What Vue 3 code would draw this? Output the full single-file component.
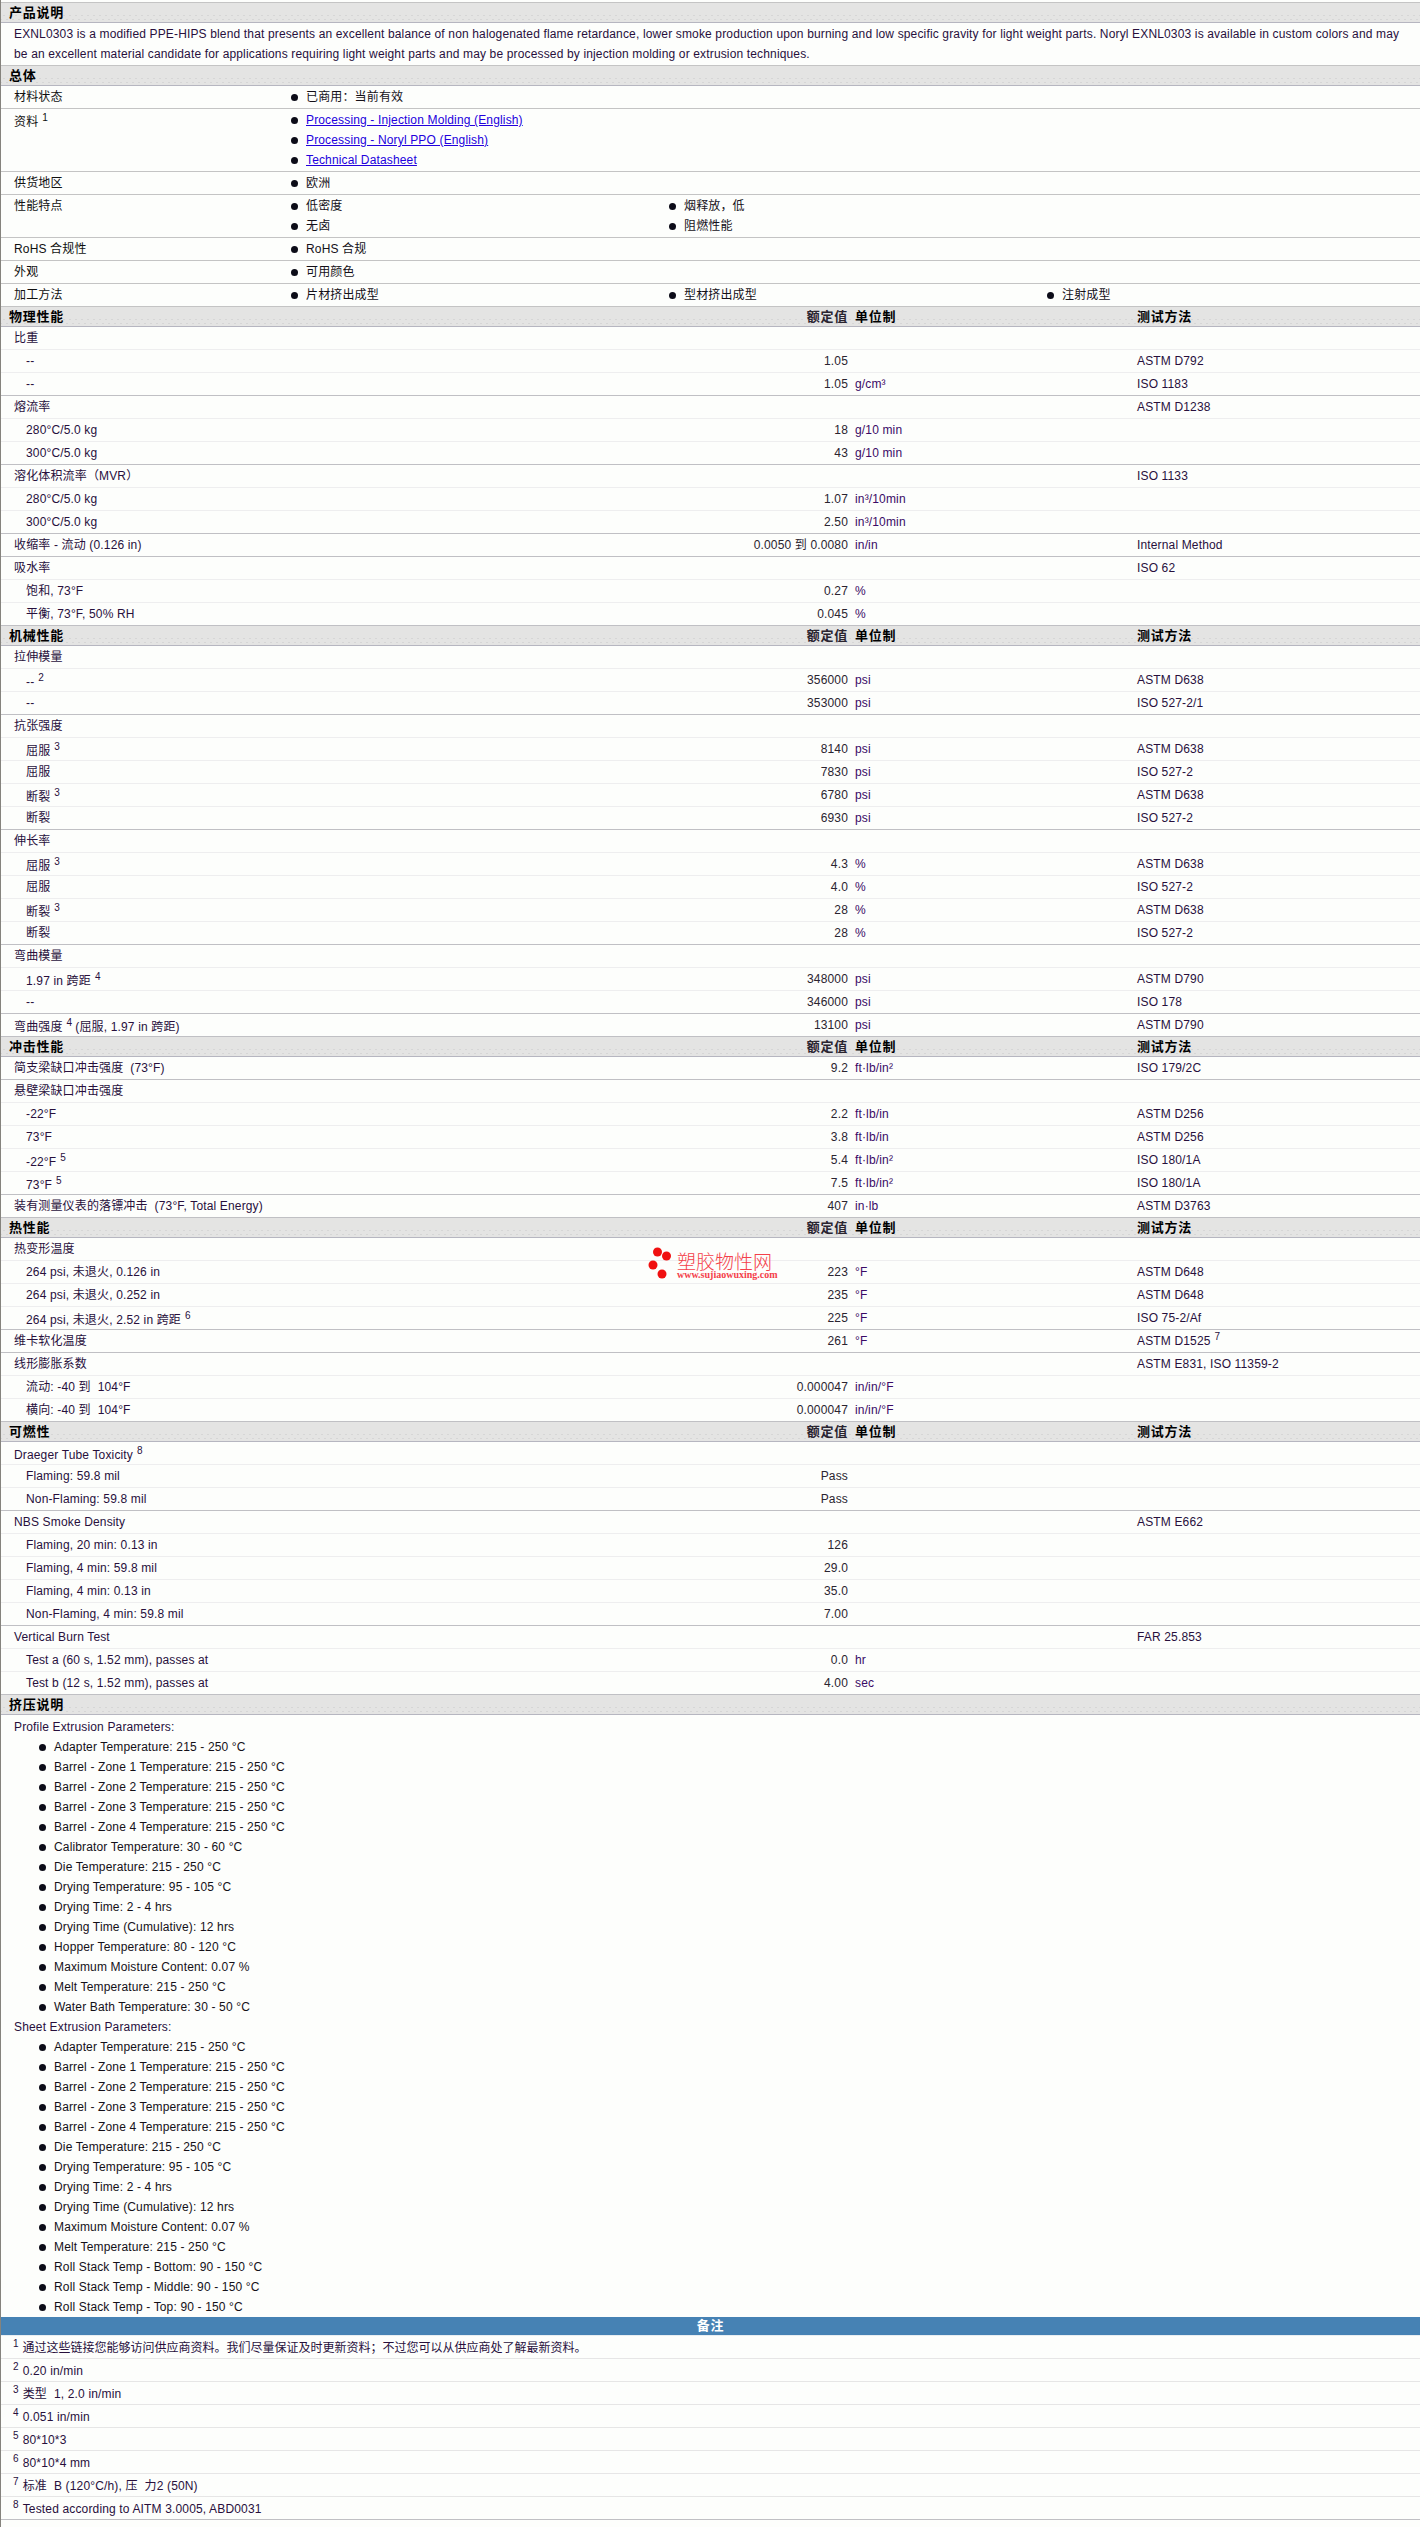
<script setup>
const r = (label, value = '', unit = '', method = '', sup = '', after = '', msup = '') => ({ label, value, unit, method, sup, after, msup })

const overview = [
  { label: '材料状态', cols: [[{ text: '已商用：当前有效' }]] },
  { label: '资料', sup: '1', cols: [[
    { url: 'Processing - Injection Molding (English)' },
    { url: 'Processing - Noryl PPO (English)' },
    { url: 'Technical Datasheet' }
  ]] },
  { label: '供货地区', cols: [[{ text: '欧洲' }]] },
  { label: '性能特点', cols: [[{ text: '低密度' }, { text: '无卤' }], [{ text: '烟释放，低' }, { text: '阻燃性能' }]] },
  { label: 'RoHS 合规性', cols: [[{ text: 'RoHS 合规' }]] },
  { label: '外观', cols: [[{ text: '可用颜色' }]] },
  { label: '加工方法', cols: [[{ text: '片材挤出成型' }], [{ text: '型材挤出成型' }], [{ text: '注射成型' }]] }
]

const sections = [
  { title: '物理性能', groups: [
    [r('比重'), r('--', '1.05', '', 'ASTM D792'), r('--', '1.05', 'g/cm³', 'ISO 1183')],
    [r('熔流率', '', '', 'ASTM D1238'), r('280°C/5.0 kg', '18', 'g/10 min'), r('300°C/5.0 kg', '43', 'g/10 min')],
    [r('溶化体积流率（MVR）', '', '', 'ISO 1133'), r('280°C/5.0 kg', '1.07', 'in³/10min'), r('300°C/5.0 kg', '2.50', 'in³/10min')],
    [r('收缩率 - 流动 (0.126 in)', '0.0050 到 0.0080', 'in/in', 'Internal Method')],
    [r('吸水率', '', '', 'ISO 62'), r('饱和, 73°F', '0.27', '%'), r('平衡, 73°F, 50% RH', '0.045', '%')]
  ] },
  { title: '机械性能', groups: [
    [r('拉伸模量'), r('--', '356000', 'psi', 'ASTM D638', '2'), r('--', '353000', 'psi', 'ISO 527-2/1')],
    [r('抗张强度'), r('屈服', '8140', 'psi', 'ASTM D638', '3'), r('屈服', '7830', 'psi', 'ISO 527-2'), r('断裂', '6780', 'psi', 'ASTM D638', '3'), r('断裂', '6930', 'psi', 'ISO 527-2')],
    [r('伸长率'), r('屈服', '4.3', '%', 'ASTM D638', '3'), r('屈服', '4.0', '%', 'ISO 527-2'), r('断裂', '28', '%', 'ASTM D638', '3'), r('断裂', '28', '%', 'ISO 527-2')],
    [r('弯曲模量'), r('1.97 in 跨距', '348000', 'psi', 'ASTM D790', '4'), r('--', '346000', 'psi', 'ISO 178')],
    [r('弯曲强度', '13100', 'psi', 'ASTM D790', '4', '(屈服, 1.97 in 跨距)')]
  ] },
  { title: '冲击性能', groups: [
    [r('简支梁缺口冲击强度  (73°F)', '9.2', 'ft·lb/in²', 'ISO 179/2C')],
    [r('悬壁梁缺口冲击强度'), r('-22°F', '2.2', 'ft·lb/in', 'ASTM D256'), r('73°F', '3.8', 'ft·lb/in', 'ASTM D256'), r('-22°F', '5.4', 'ft·lb/in²', 'ISO 180/1A', '5'), r('73°F', '7.5', 'ft·lb/in²', 'ISO 180/1A', '5')],
    [r('装有测量仪表的落镖冲击  (73°F, Total Energy)', '407', 'in·lb', 'ASTM D3763')]
  ] },
  { title: '热性能', groups: [
    [r('热变形温度'), r('264 psi, 未退火, 0.126 in', '223', '°F', 'ASTM D648'), r('264 psi, 未退火, 0.252 in', '235', '°F', 'ASTM D648'), r('264 psi, 未退火, 2.52 in 跨距', '225', '°F', 'ISO 75-2/Af', '6')],
    [r('维卡软化温度', '261', '°F', 'ASTM D1525', '', '', '7')],
    [r('线形膨胀系数', '', '', 'ASTM E831, ISO 11359-2'), r('流动: -40 到  104°F', '0.000047', 'in/in/°F'), r('横向: -40 到  104°F', '0.000047', 'in/in/°F')]
  ] },
  { title: '可燃性', groups: [
    [r('Draeger Tube Toxicity', '', '', '', '8'), r('Flaming: 59.8 mil', 'Pass'), r('Non-Flaming: 59.8 mil', 'Pass')],
    [r('NBS Smoke Density', '', '', 'ASTM E662'), r('Flaming, 20 min: 0.13 in', '126'), r('Flaming, 4 min: 59.8 mil', '29.0'), r('Flaming, 4 min: 0.13 in', '35.0'), r('Non-Flaming, 4 min: 59.8 mil', '7.00')],
    [r('Vertical Burn Test', '', '', 'FAR 25.853'), r('Test a (60 s, 1.52 mm), passes at', '0.0', 'hr'), r('Test b (12 s, 1.52 mm), passes at', '4.00', 'sec')]
  ] }
]

const extrusion = [
  { title: 'Profile Extrusion Parameters:', items: [
    'Adapter Temperature: 215 - 250 °C',
    'Barrel - Zone 1 Temperature: 215 - 250 °C',
    'Barrel - Zone 2 Temperature: 215 - 250 °C',
    'Barrel - Zone 3 Temperature: 215 - 250 °C',
    'Barrel - Zone 4 Temperature: 215 - 250 °C',
    'Calibrator Temperature: 30 - 60 °C',
    'Die Temperature: 215 - 250 °C',
    'Drying Temperature: 95 - 105 °C',
    'Drying Time: 2 - 4 hrs',
    'Drying Time (Cumulative): 12 hrs',
    'Hopper Temperature: 80 - 120 °C',
    'Maximum Moisture Content: 0.07 %',
    'Melt Temperature: 215 - 250 °C',
    'Water Bath Temperature: 30 - 50 °C'
  ] },
  { title: 'Sheet Extrusion Parameters:', items: [
    'Adapter Temperature: 215 - 250 °C',
    'Barrel - Zone 1 Temperature: 215 - 250 °C',
    'Barrel - Zone 2 Temperature: 215 - 250 °C',
    'Barrel - Zone 3 Temperature: 215 - 250 °C',
    'Barrel - Zone 4 Temperature: 215 - 250 °C',
    'Die Temperature: 215 - 250 °C',
    'Drying Temperature: 95 - 105 °C',
    'Drying Time: 2 - 4 hrs',
    'Drying Time (Cumulative): 12 hrs',
    'Maximum Moisture Content: 0.07 %',
    'Melt Temperature: 215 - 250 °C',
    'Roll Stack Temp - Bottom: 90 - 150 °C',
    'Roll Stack Temp - Middle: 90 - 150 °C',
    'Roll Stack Temp - Top: 90 - 150 °C'
  ] }
]

const notes = [
  '通过这些链接您能够访问供应商资料。我们尽量保证及时更新资料；不过您可以从供应商处了解最新资料。',
  '0.20 in/min',
  '类型  1, 2.0 in/min',
  '0.051 in/min',
  '80*10*3',
  '80*10*4 mm',
  '标准  B (120°C/h), 压  力2 (50N)',
  'Tested according to AITM 3.0005, ABD0031'
]
</script>

<template>
  <div class="page">
    <div class="head first"><span class="head-title">产品说明</span></div>
    <p class="desc">EXNL0303 is a modified PPE-HIPS blend that presents an excellent balance of non halogenated flame retardance, lower smoke production upon burning and low specific gravity for light weight parts. Noryl EXNL0303 is available in custom colors and may be an excellent material candidate for applications requiring light weight parts and may be processed by injection molding or extrusion techniques.</p>

    <div class="head"><span class="head-title">总体</span></div>
    <div v-for="row in overview" :key="row.label" class="ov-row">
      <div class="ov-label" :class="{ raised: row.sup }">{{ row.label }}<sup v-if="row.sup">{{ row.sup }}</sup></div>
      <div v-for="(col, c) in row.cols" :key="c" class="ov-col">
        <div v-for="(item, i) in col" :key="i" class="dot-item">
          <a v-if="item.url" href="#" class="link">{{ item.url }}</a>
          <template v-else>{{ item.text }}</template>
        </div>
      </div>
    </div>

    <template v-for="s in sections" :key="s.title">
      <div class="head cols">
        <span class="head-title">{{ s.title }}</span>
        <span class="val">额定值</span>
        <span class="unit">单位制</span>
        <span>测试方法</span>
      </div>
      <template v-for="(g, gi) in s.groups" :key="gi">
        <div
          v-for="(row, ri) in g"
          :key="ri"
          class="row"
          :class="{ sub: ri > 0, end: ri === g.length - 1 }"
        >
          <div class="label" :class="{ raised: row.sup }">{{ row.label }}<sup v-if="row.sup">{{ row.sup }}</sup><span v-if="row.after" class="after">{{ row.after }}</span></div>
          <div class="val">{{ row.value }}</div>
          <div class="unit">{{ row.unit }}</div>
          <div class="method">{{ row.method }}<sup v-if="row.msup">{{ row.msup }}</sup></div>
        </div>
      </template>
    </template>

    <div class="head"><span class="head-title">挤压说明</span></div>
    <div class="extrusion">
      <template v-for="block in extrusion" :key="block.title">
        <div class="ex-title">{{ block.title }}</div>
        <div v-for="(item, i) in block.items" :key="i" class="dot-item ex-item">{{ item }}</div>
      </template>
    </div>

    <div class="bar">备注</div>
    <div v-for="(note, i) in notes" :key="i" class="note" :class="{ end: i === notes.length - 1, cjk: i === 0 }">
      <sup>{{ i + 1 }}</sup>{{ note }}
    </div>

    <div class="mark">
      <svg class="mark-dots" width="28" height="34" viewBox="0 0 28 34">
        <circle cx="9.5" cy="5" r="4.5" fill="#f01010" />
        <circle cx="18.5" cy="9" r="4.5" fill="#f01010" />
        <circle cx="5" cy="18" r="4.5" fill="#f01010" />
        <circle cx="14" cy="27" r="4.5" fill="#f01010" />
      </svg>
      <div class="mark-text">
        <div class="mark-cn">塑胶物性网</div>
        <div class="mark-url">www.sujiaowuxing.com</div>
      </div>
    </div>
  </div>
</template>

<style>
html, body { margin: 0; background: #fff; }
</style>

<style scoped>
.page {
  position: relative;
  box-sizing: border-box;
  width: 1420px;
  min-height: 2527px;
  padding-top: 2px;
  border-left: 1px solid #85837d;
  background: #fdfefc;
  font: 12px/20px "Liberation Sans", "Noto Sans CJK SC", sans-serif;
  letter-spacing: 0.15px;
  color: #28103c;
  white-space: pre-wrap;
}
.head {
  box-sizing: border-box;
  height: 20px;
  padding-left: 8px;
  font-size: 13px;
  line-height: 19px;
  letter-spacing: 0.75px;
  border-bottom: 1px solid #b6b6c0;
  background:
    radial-gradient(circle, #d6d6d6 0.6px, transparent 0.8px) 60px 11px / 6px 3px repeat-x,
    radial-gradient(circle, #d6d6d6 0.6px, transparent 0.8px) 63px 15px / 6px 3px repeat-x,
    #e4e4e3;
  font-weight: 700;
  color: #000;
}
.head.first {
  height: 21px;
  border-top: 1px solid #c4c4c4;
}
.head.cols {
  display: grid;
  grid-template-columns: 691px 148px 289px 1fr;
}
.desc {
  margin: 0;
  padding: 1px 20px 1px 13px;
  border-bottom: 1px solid #c4c4c4;
}
.ov-row {
  display: grid;
  grid-template-columns: 290px repeat(3, 378px);
  box-sizing: border-box;
  padding: 1px 0;
  border-bottom: 1px solid #c4c4c4;
}
.ov-label { padding-left: 13px; color: #101010; }
.dot-item {
  display: flex;
  align-items: center;
  color: #141018;
}
.dot-item::before {
  content: "";
  flex: none;
  width: 7px;
  height: 7px;
  margin-right: 8px;
  border-radius: 50%;
  background: #0c0c18;
}
.link { color: #2200dd; text-decoration: underline; }
.row {
  display: grid;
  grid-template-columns: 699px 148px 289px 1fr;
  box-sizing: border-box;
  height: 23px;
  padding: 1px 0;
  border-bottom: 1px solid #eeeeef;
}
.row.end { border-bottom-color: #c0c0c4; }
.label { padding-left: 13px; }
.row.sub .label { padding-left: 25px; }
.raised { padding-top: 2px; }
.val { text-align: right; color: #2a2430; }
.unit { padding-left: 7px; color: #3a0a66; }
.head .unit { color: #000; }
.after { margin-left: 3px; }
sup {
  margin-left: 4px;
  font-size: 10px;
  line-height: 0;
  vertical-align: 5px;
}
.extrusion { padding-top: 2px; }
.ex-title { padding-left: 13px; }
.ex-item { padding-left: 38px; }
.bar {
  box-sizing: border-box;
  height: 19px;
  font-size: 13px;
  line-height: 18px;
  letter-spacing: 0.75px;
  border-bottom: 1px solid #e8eef2;
  background: #4682b4;
  color: #fff;
  font-weight: 700;
  text-align: center;
}
.note {
  box-sizing: border-box;
  height: 23px;
  padding: 2px 0 0 8px;
  border-bottom: 1px solid #e6e6e6;
}
.note.cjk { letter-spacing: 0; }
.note.end { border-bottom-color: #c0c0c4; }
.note sup { margin-right: 4px; }
.mark {
  position: absolute;
  left: 647px;
  top: 1247px;
  display: flex;
  gap: 1px;
  color: #f4404a;
}
.mark-dots { display: block; }
.mark-text { padding-top: 4px; }
.mark-cn {
  font-size: 19px;
  line-height: 19px;
  font-family: "Noto Sans CJK SC", sans-serif;
  font-weight: 300;
  letter-spacing: 0;
  white-space: nowrap;
}
.mark-url {
  font: 700 10px/10px "Liberation Serif", serif;
  letter-spacing: 0;
  white-space: nowrap;
}
</style>
